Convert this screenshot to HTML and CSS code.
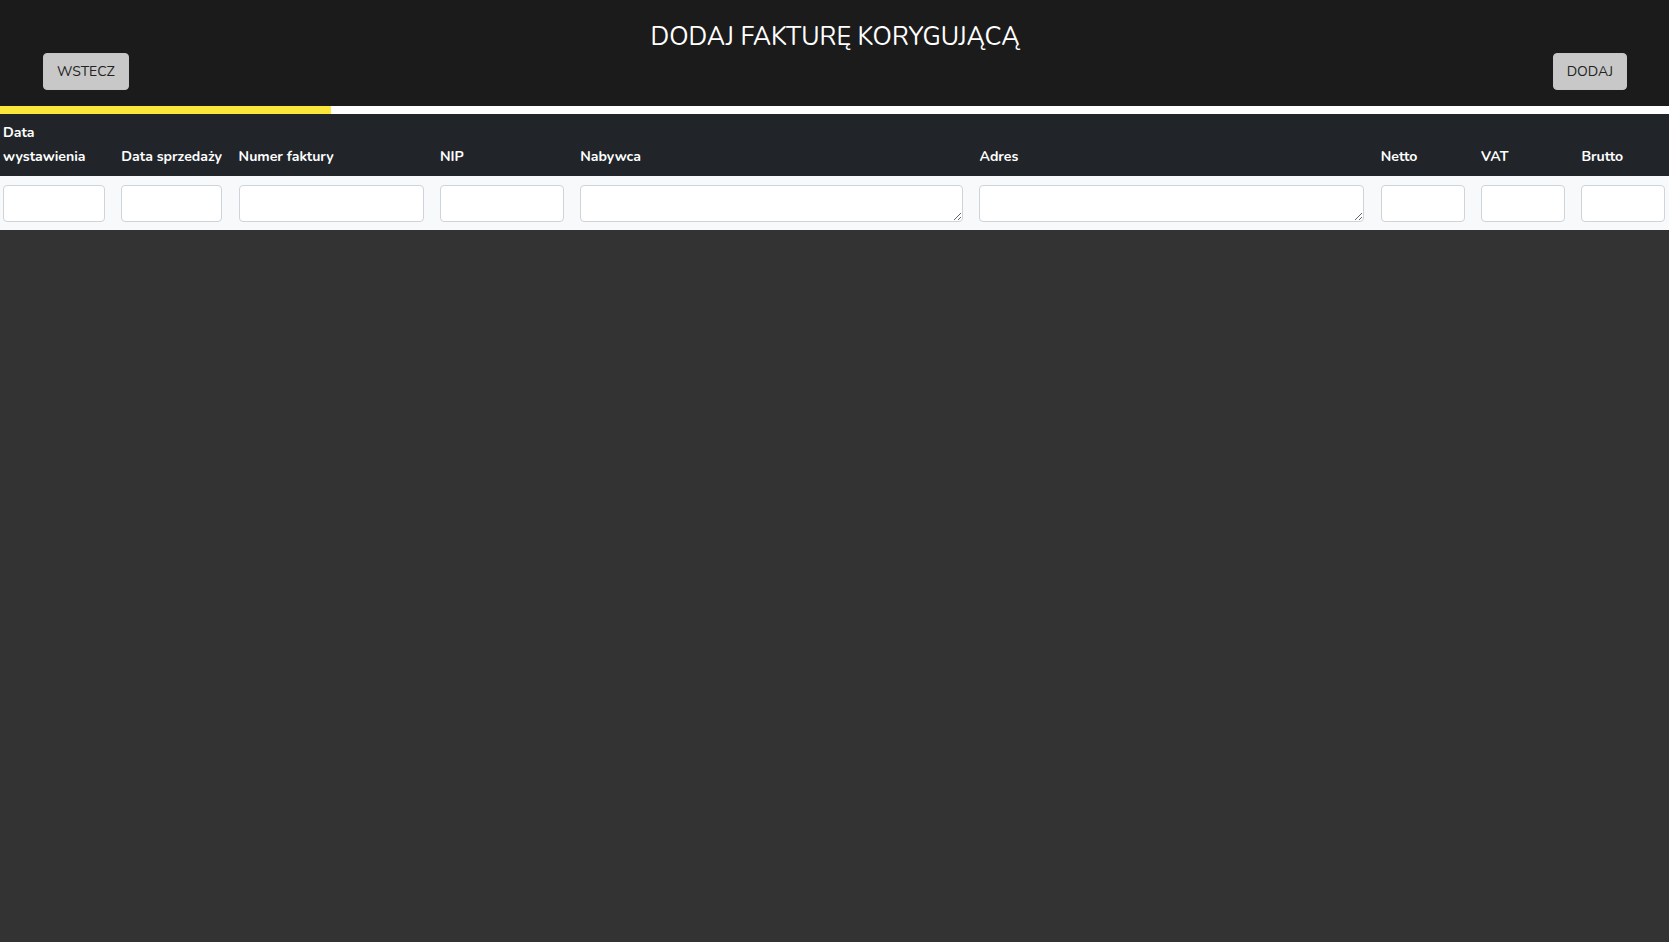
FILE: index.html
```html
<!DOCTYPE html>
<html lang="pl">
<head>
<meta charset="utf-8">
<title>Dodaj fakturę korygującą</title>
<link rel="stylesheet" href="styles.css">
</head>
<body>
<header class="top">
  <h1 class="title">DODAJ FAKTURĘ KORYGUJĄCĄ</h1>
  <div class="actions">
    <button class="btn" type="button">WSTECZ</button>
    <button class="btn" type="button">DODAJ</button>
  </div>
</header>
<div class="progress"><div class="progress-fill" style="width:331px"></div></div>
<div class="grid head">
  <div class="th">Data wystawienia</div>
  <div class="th">Data sprzedaży</div>
  <div class="th">Numer faktury</div>
  <div class="th">NIP</div>
  <div class="th">Nabywca</div>
  <div class="th">Adres</div>
  <div class="th">Netto</div>
  <div class="th">VAT</div>
  <div class="th">Brutto</div>
</div>
<div class="grid body">
  <input class="field" type="text">
  <input class="field" type="text">
  <input class="field" type="text">
  <input class="field" type="text">
  <textarea class="field area" rows="1"></textarea>
  <textarea class="field area" rows="1"></textarea>
  <input class="field" type="text">
  <input class="field" type="text">
  <input class="field" type="text">
</div>
</body>
</html>
```
FILE: styles.css
```css
* { box-sizing: border-box; }
html, body { margin: 0; padding: 0; }
body {
  background: #333333;
  font-family: "Nunito", "Lato", sans-serif;
  color: #fff;
  min-height: 942px;
}
.top {
  background: #1b1b1b;
  padding: 22px 42px 16px 43px;
}
.title {
  margin: 0;
  text-align: center;
  font-weight: 400;
  font-size: 25.2px;
  line-height: 31px;
  color: #fff;
}
.actions {
  display: flex;
  justify-content: space-between;
}
.btn {
  font-family: inherit;
  font-size: 14px;
  line-height: 23px;
  height: 37px;
  padding: 6px 13px;
  border: 1px solid #c6c6c6;
  border-radius: 4px;
  background: #c8c8c8;
  color: #222;
}
.progress {
  height: 8px;
  background: #ffffff;
}
.progress-fill {
  height: 100%;
  background: #fbe73b;
}
.grid {
  display: grid;
  grid-template-columns: 102px 101px 185px 124px 383px 385px 84px 84px 84px;
  column-gap: 16.3px;
  padding: 0 2px 0 3px;
}
.head {
  background: #212529;
  align-items: end;
  padding-top: 7px;
  padding-bottom: 7px;
  min-height: 62px;
}
.th {
  font-weight: 700;
  font-size: 14.1px;
  line-height: 24px;
}
.body {
  background: #f8f9fa;
  padding-top: 9px;
  padding-bottom: 8px;
}
.field {
  display: block;
  width: 100%;
  height: 37px;
  margin: 0;
  border: 1px solid #ced4da;
  border-radius: 4px;
  background: #fff;
  font-family: inherit;
  font-size: 15px;
  padding: 6px 10px;
}
.area {
  resize: both;
  min-height: 37px;
}
```
